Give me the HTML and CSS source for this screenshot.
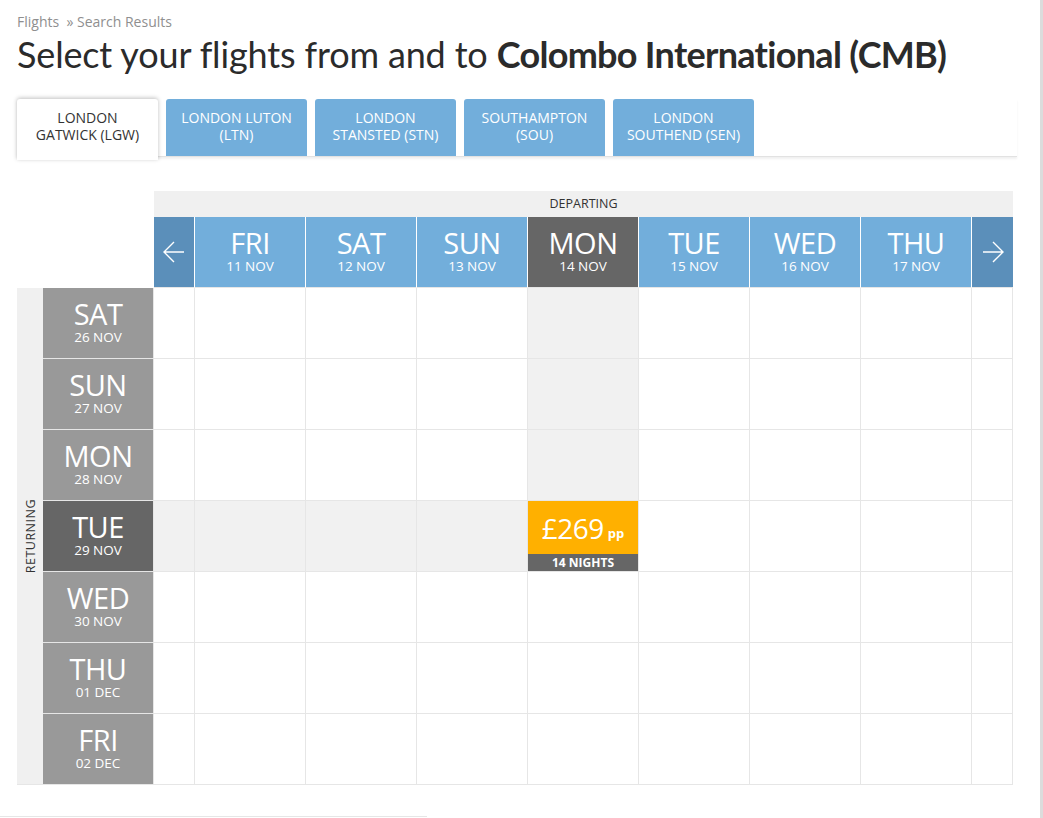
FILE: index.html
```html
<!DOCTYPE html>
<html lang="en">
<head>
  <meta charset="UTF-8">
  <meta name="viewport" content="width=device-width, initial-scale=1.0">
  <title>Search Results - Flights</title>
  <link rel="stylesheet" href="styles.css">
</head>
<body>
  <div class="page">
    <div class="breadcrumb"><a href="#">Flights</a> &nbsp;» Search Results</div>
    <h1 class="title">Select your flights from and to <strong>Colombo International (CMB)</strong></h1>

    <!-- Airport tabs -->
    <div class="tabs">
      <div class="tab active">London<br>Gatwick (LGW)</div>
      <div class="tab">London Luton<br>(LTN)</div>
      <div class="tab">London<br>Stansted (STN)</div>
      <div class="tab">Southampton<br>(SOU)</div>
      <div class="tab">London<br>Southend (SEN)</div>
    </div>

    <!-- Departing / returning price grid -->
    <div class="calendar">
      <div class="corner"></div>
      <div class="departing">Departing</div>

      <div class="nav prev">
        <svg width="24" height="24" viewBox="0 0 24 24"><path d="M22 12H2M12 2L2 12l10 10"/></svg>
      </div>
      <div class="day-head"><span class="dow">Fri</span><span class="date">11 Nov</span></div>
      <div class="day-head"><span class="dow">Sat</span><span class="date">12 Nov</span></div>
      <div class="day-head"><span class="dow">Sun</span><span class="date">13 Nov</span></div>
      <div class="day-head selected"><span class="dow">Mon</span><span class="date">14 Nov</span></div>
      <div class="day-head"><span class="dow">Tue</span><span class="date">15 Nov</span></div>
      <div class="day-head"><span class="dow">Wed</span><span class="date">16 Nov</span></div>
      <div class="day-head"><span class="dow">Thu</span><span class="date">17 Nov</span></div>
      <div class="nav next">
        <svg width="24" height="24" viewBox="0 0 24 24"><path d="M2 12h20M12 2l10 10-10 10"/></svg>
      </div>

      <div class="returning"><span>Returning</span></div>

      <!-- Sat 26 Nov -->
      <div class="day-label"><span class="dow">Sat</span><span class="date">26 Nov</span></div>
      <div class="cell"></div><div class="cell"></div><div class="cell"></div><div class="cell"></div>
      <div class="cell hl"></div>
      <div class="cell"></div><div class="cell"></div><div class="cell"></div><div class="cell"></div>

      <!-- Sun 27 Nov -->
      <div class="day-label"><span class="dow">Sun</span><span class="date">27 Nov</span></div>
      <div class="cell"></div><div class="cell"></div><div class="cell"></div><div class="cell"></div>
      <div class="cell hl"></div>
      <div class="cell"></div><div class="cell"></div><div class="cell"></div><div class="cell"></div>

      <!-- Mon 28 Nov -->
      <div class="day-label"><span class="dow">Mon</span><span class="date">28 Nov</span></div>
      <div class="cell"></div><div class="cell"></div><div class="cell"></div><div class="cell"></div>
      <div class="cell hl"></div>
      <div class="cell"></div><div class="cell"></div><div class="cell"></div><div class="cell"></div>

      <!-- Tue 29 Nov -->
      <div class="day-label selected"><span class="dow">Tue</span><span class="date">29 Nov</span></div>
      <div class="cell hl"></div><div class="cell hl"></div><div class="cell hl"></div><div class="cell hl"></div>
      <div class="cell price">
        <div class="amount">£269<small>pp</small></div>
        <div class="nights">14 Nights</div>
      </div>
      <div class="cell"></div><div class="cell"></div><div class="cell"></div><div class="cell"></div>

      <!-- Wed 30 Nov -->
      <div class="day-label"><span class="dow">Wed</span><span class="date">30 Nov</span></div>
      <div class="cell"></div><div class="cell"></div><div class="cell"></div><div class="cell"></div>
      <div class="cell"></div>
      <div class="cell"></div><div class="cell"></div><div class="cell"></div><div class="cell"></div>

      <!-- Thu 01 Dec -->
      <div class="day-label"><span class="dow">Thu</span><span class="date">01 Dec</span></div>
      <div class="cell"></div><div class="cell"></div><div class="cell"></div><div class="cell"></div>
      <div class="cell"></div>
      <div class="cell"></div><div class="cell"></div><div class="cell"></div><div class="cell"></div>

      <!-- Fri 02 Dec -->
      <div class="day-label"><span class="dow">Fri</span><span class="date">02 Dec</span></div>
      <div class="cell"></div><div class="cell"></div><div class="cell"></div><div class="cell"></div>
      <div class="cell"></div>
      <div class="cell"></div><div class="cell"></div><div class="cell"></div><div class="cell"></div>
    </div>

    <div class="next-section"></div>
  </div>
</body>
</html>
```

FILE: styles.css
```css
* {
  box-sizing: border-box;
}

html {
  border-right: 3px solid #dcdcdc;
}

body {
  margin: 0;
  padding: 0;
  font-family: "Open Sans", Arial, sans-serif;
  color: #333;
  background-color: white;
  overflow: hidden;
}

.page {
  padding: 12px 0 0 17px;
}

.breadcrumb {
  font-size: 14px;
  line-height: 20px;
  color: #8f8f8f;
}

.breadcrumb a {
  color: #8f8f8f;
  text-decoration: none;
}

.title {
  margin: 0;
  font-family: Lato, "Open Sans", sans-serif;
  font-weight: 400;
  font-size: 36px;
  line-height: 44px;
  letter-spacing: -0.15px;
  color: #2b2b2b;
  white-space: nowrap;
}

.title strong {
  font-weight: 700;
  letter-spacing: -0.7px;
}

/* tabs */
.tabs {
  display: flex;
  gap: 8px;
  width: 1000px;
  margin-top: 23px;
  border-bottom: 1px solid #e2e2e2;
  box-shadow: 0 2px 2px rgba(0, 0, 0, 0.06);
}

.tab {
  width: 141px;
  height: 57px;
  padding-top: 10px;
  border-radius: 3px 3px 0 0;
  background-color: #72aedb;
  color: white;
  font-size: 14px;
  line-height: 17px;
  text-align: center;
  text-transform: uppercase;
}

.tab.active {
  height: 61px;
  margin-bottom: -4px;
  background-color: white;
  color: #333;
  box-shadow: 0 -1px 4px rgba(0, 0, 0, 0.25);
  position: relative;
}

/* calendar grid */
.calendar {
  display: grid;
  grid-template-columns: 26px 111px 41px repeat(7, 111px) 41px;
  grid-template-rows: 26px 71px repeat(7, 71px);
  width: 996px;
  margin-top: 34px;
}

.corner {
  grid-column: 1 / span 2;
  grid-row: 1 / span 2;
}

.departing {
  grid-column: 3 / span 9;
  grid-row: 1;
  background-color: #f0f0f0;
  font-size: 12.5px;
  line-height: 26px;
  text-align: center;
  text-transform: uppercase;
}

.nav {
  display: flex;
  align-items: center;
  justify-content: center;
  background-color: #5b8fba;
  border-right: 1px solid white;
  border-bottom: 1px solid #e6e6e6;
}

.nav.next {
  border-right: 0;
}

.nav svg {
  fill: none;
  stroke: white;
  stroke-width: 1.4;
}

.day-head,
.day-label {
  display: flex;
  flex-direction: column;
  align-items: center;
  justify-content: center;
  color: white;
  text-transform: uppercase;
}

.day-head {
  padding-bottom: 2px;
  background-color: #72aedb;
  border-right: 1px solid white;
  border-bottom: 1px solid #e6e6e6;
}

.day-head.selected,
.day-label.selected {
  background-color: #666;
}

.dow {
  font-size: 29px;
  font-weight: 500;
  line-height: 30px;
  letter-spacing: -0.5px;
}

.date {
  font-size: 13.5px;
  font-weight: 500;
  line-height: 16px;
}

.returning {
  grid-column: 1;
  grid-row: 3 / span 7;
  display: flex;
  align-items: center;
  justify-content: center;
  background-color: #f0f0f0;
  border-bottom: 1px solid #e6e6e6;
}

.returning span {
  writing-mode: vertical-rl;
  transform: rotate(180deg);
  font-size: 12.5px;
  letter-spacing: 0.5px;
  text-transform: uppercase;
}

.day-label {
  padding-bottom: 2px;
  background-color: #999;
  border-right: 1px solid #e6e6e6;
  border-bottom: 1px solid #e6e6e6;
}

.cell {
  border-right: 1px solid #e6e6e6;
  border-bottom: 1px solid #e6e6e6;
}

.cell.hl {
  background-color: #f1f1f1;
}

.cell.price {
  display: flex;
  flex-direction: column;
  color: white;
  text-align: center;
}

.price .amount {
  flex: 1;
  display: flex;
  align-items: center;
  justify-content: center;
  background-color: #ffb000;
  font-size: 28px;
  letter-spacing: -0.5px;
}

.price .amount small {
  margin: 10px 0 0 4px;
  font-size: 13px;
  font-weight: 700;
  letter-spacing: 0;
}

.price .nights {
  height: 17px;
  background-color: #666;
  font-size: 12px;
  font-weight: 700;
  line-height: 17px;
  text-transform: uppercase;
}

.next-section {
  width: 427px;
  margin: 31px 0 0 -17px;
  border-top: 1px solid #e6e6e6;
  height: 20px;
}
```
